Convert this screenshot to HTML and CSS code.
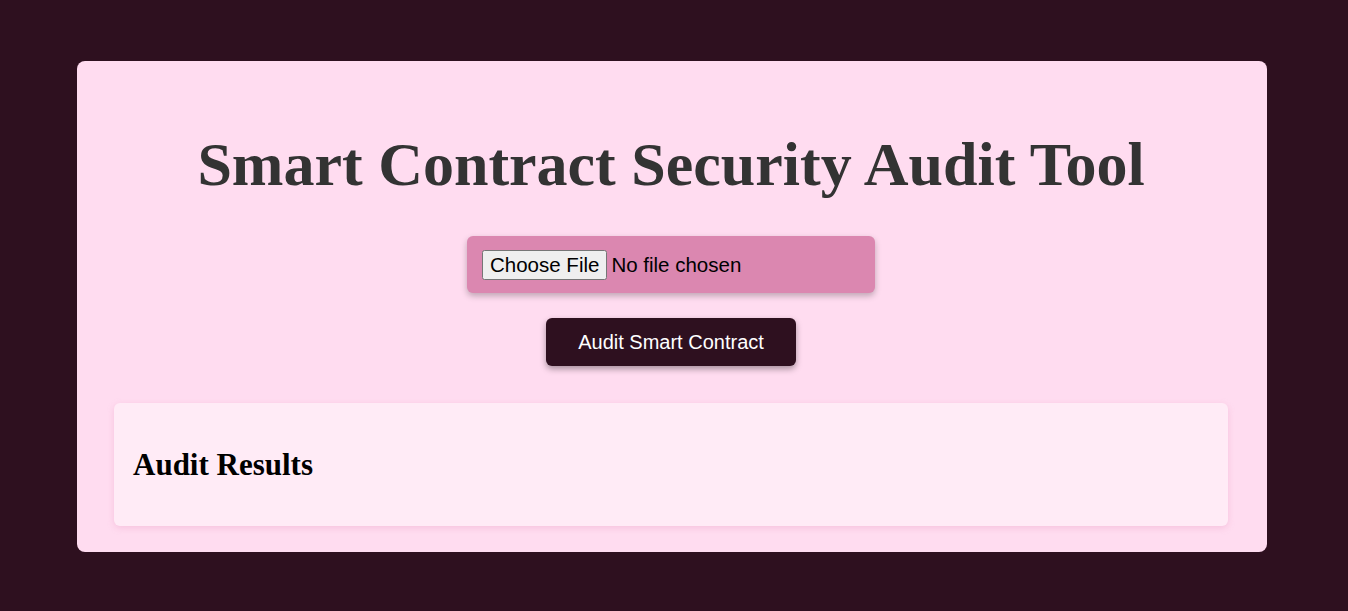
FILE: index.html
```html
<!DOCTYPE html>
<html>
<head>
<meta charset="utf-8">
<link rel="stylesheet" href="styles.css">
</head>
<body>
<div class="container">
  <h1 class="title">Smart Contract Security Audit Tool</h1>
  <div class="upload">
    <input type="file" class="file-input">
  </div>
  <button class="audit-btn">Audit Smart Contract</button>
  <div class="results">
    <h2 class="results-title">Audit Results</h2>
  </div>
</div>
</body>
</html>
```
FILE: styles.css
```css
html, body {
  margin: 0;
  padding: 0;
}
body {
  background: #2e101f;
  font-family: "Liberation Serif", serif;
  padding: 61px 0;
}
.container {
  width: 1114px;
  margin: 0 0 0 77px;
  padding: 38px 39px 26px 37px;
  background: #ffdcf0;
  border-radius: 8px;
  display: flex;
  flex-direction: column;
  align-items: center;
  box-sizing: content-box;
}
.title {
  margin: 30px 0 37px;
  font-family: "Liberation Serif", serif;
  font-weight: bold;
  font-size: 62px;
  line-height: 70px;
  color: #333333;
  text-align: center;
}
.upload {
  width: 408px;
  height: 57px;
  box-sizing: border-box;
  padding: 14px 15px;
  background: #db87b0;
  border-radius: 6px;
  box-shadow: 0 3px 6px rgba(0,0,0,0.25);
  display: flex;
  align-items: center;
}
.file-input {
  font-family: "Liberation Sans", Arial, sans-serif;
  font-size: 20.5px;
  color: #000;
}
.audit-btn {
  margin-top: 25px;
  width: 250px;
  height: 48px;
  background: #2e101f;
  color: #ffffff;
  border: none;
  border-radius: 6px;
  font-family: "Liberation Sans", Arial, sans-serif;
  font-size: 20px;
  box-shadow: 0 3px 6px rgba(0,0,0,0.35);
  cursor: pointer;
}
.results {
  align-self: stretch;
  margin-top: 37px;
  height: 123px;
  box-sizing: border-box;
  padding: 0 19px;
  background: #ffebf6;
  border-radius: 6px;
  box-shadow: 0 2px 6px rgba(230,150,190,0.35);
  display: flex;
  align-items: center;
}
.results-title {
  margin: 0;
  font-family: "Liberation Serif", serif;
  font-weight: bold;
  font-size: 31px;
  color: #000;
}
```
